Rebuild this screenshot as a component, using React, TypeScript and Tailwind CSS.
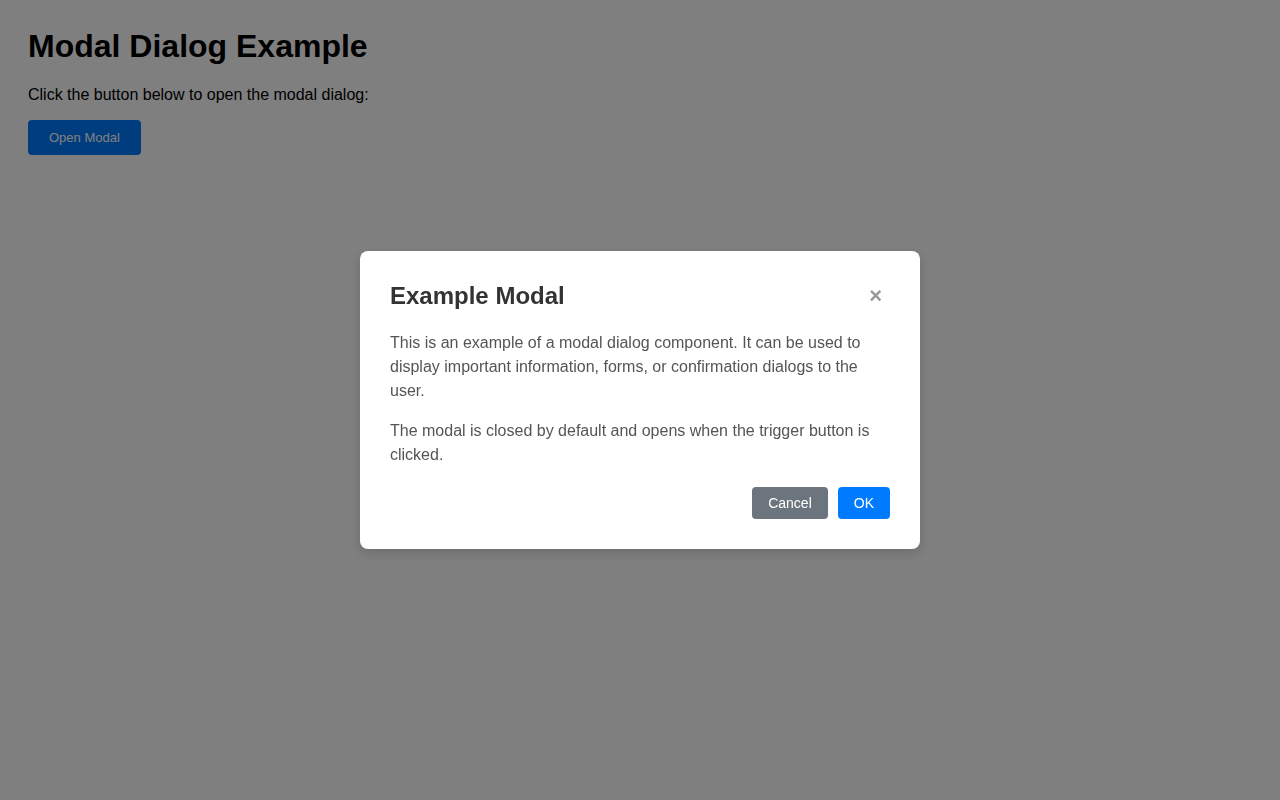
import React from "react";

export default function App() {
  return (
    <div className="min-h-[800px] bg-white font-['Liberation_Sans',Arial,sans-serif] text-black">
      <div className="px-7 pt-7">
        <h1 className="mb-[21px] text-[32px] font-bold leading-[37px]">Modal Dialog Example</h1>
        <p className="mb-4 text-base leading-[18px]">Click the button below to open the modal dialog:</p>
        <button className="rounded bg-[#007bff] px-[21px] py-[10px] text-[13px] leading-[15px] text-white">
          Open Modal
        </button>
      </div>

      <div className="fixed inset-0 flex items-center justify-center bg-black/50">
        <div className="w-[560px] rounded-lg bg-white p-[30px] shadow-[0_4px_12px_rgba(0,0,0,0.15)]">
          <div className="mb-[21px] flex items-center justify-between">
            <h2 className="text-2xl font-bold leading-[29px] text-[#333]">Example Modal</h2>
            <button className="mr-2 text-[22px] font-bold leading-none text-[#999]" aria-label="Close">
              ×
            </button>
          </div>
          <p className="mb-4 text-base leading-6 text-[#555]">
            This is an example of a modal dialog component. It can be used to display important information, forms, or
            confirmation dialogs to the user.
          </p>
          <p className="mb-4 text-base leading-6 text-[#555]">
            The modal is closed by default and opens when the trigger button is clicked.
          </p>
          <div className="mt-5 flex justify-end gap-[10px]">
            <button className="rounded bg-[#6c757d] px-4 py-2 text-sm leading-4 text-white">Cancel</button>
            <button className="rounded bg-[#007bff] px-4 py-2 text-sm leading-4 text-white">OK</button>
          </div>
        </div>
      </div>
    </div>
  );
}
